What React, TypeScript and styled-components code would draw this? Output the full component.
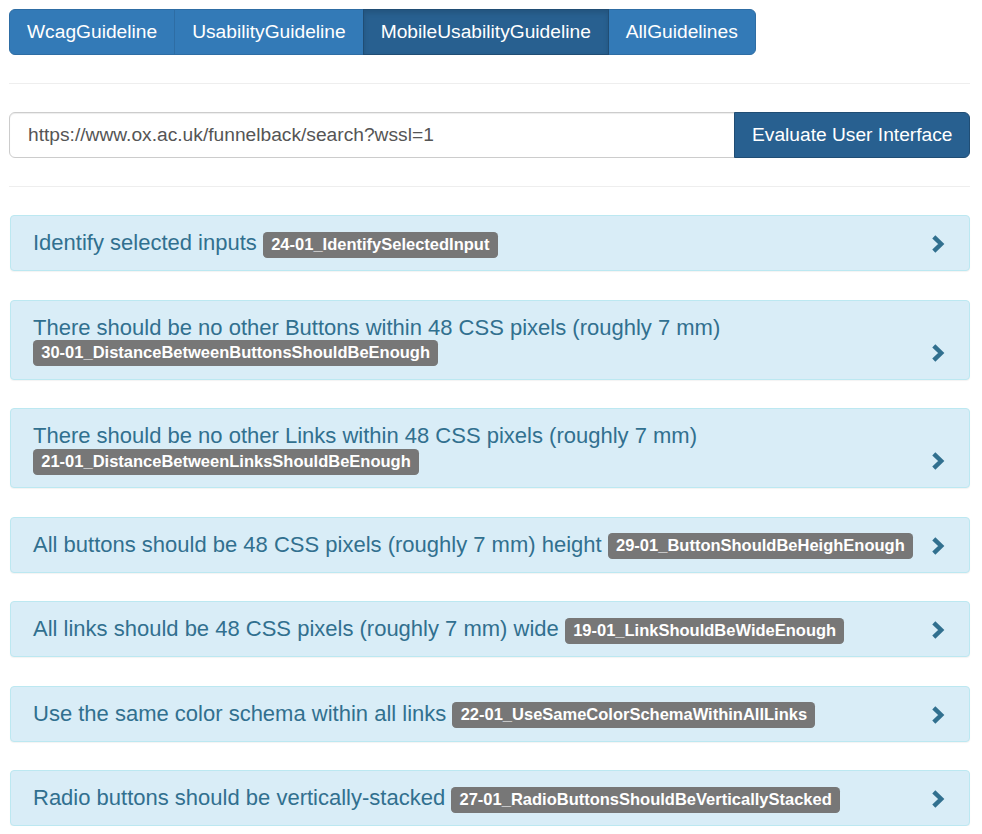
import React from "react";
import styled, { createGlobalStyle, css } from "styled-components";

const GlobalStyle = createGlobalStyle`
  html, body { margin: 0; padding: 0; background: #fff; }
  body {
    font-family: "Liberation Sans", Arial, Helvetica, sans-serif;
    color: #333;
  }
  * { box-sizing: border-box; }
`;

const Page = styled.div`
  padding: 9px 12px 0 9px;
`;

const ButtonGroup = styled.div`
  display: inline-flex;
`;

const GroupButton = styled.button<{ $active?: boolean }>`
  font-family: inherit;
  font-size: 19.2px;
  line-height: 24px;
  padding: 10px 17px;
  color: #fff;
  background: #337ab7;
  border: 1px solid #2e6da4;
  border-radius: 0;
  margin-left: -1px;
  cursor: pointer;
  &:first-child {
    margin-left: 0;
    border-radius: 6px 0 0 6px;
  }
  &:last-child {
    border-radius: 0 6px 6px 0;
  }
  ${(p) =>
    p.$active &&
    css`
      background: #286090;
      border-color: #204d74;
      box-shadow: inset 0 3px 5px rgba(0, 0, 0, 0.125);
      position: relative;
    `}
`;

const Divider = styled.hr`
  margin: 28px 0;
  border: 0;
  border-top: 1px solid #eee;
`;

const InputGroup = styled.form`
  display: flex;
`;

const UrlInput = styled.input`
  flex: 1;
  min-width: 0;
  height: 46px;
  padding: 10px 18px;
  font-family: inherit;
  font-size: 19.2px;
  line-height: 24px;
  color: #555;
  background: #fff;
  border: 1px solid #ccc;
  border-radius: 6px 0 0 6px;
  box-shadow: inset 0 1px 1px rgba(0, 0, 0, 0.075);
  outline: none;
`;

const EvaluateButton = styled.button`
  flex: none;
  height: 46px;
  padding: 10px 16.5px;
  font-family: inherit;
  font-size: 19.2px;
  line-height: 24px;
  color: #fff;
  background: #286090;
  border: 1px solid #204d74;
  border-radius: 0 6px 6px 0;
  margin-left: -1px;
  cursor: pointer;
`;

const PanelList = styled.div`
  display: flex;
  flex-direction: column;
  gap: 28.5px;
  padding-left: 1px;
`;

const Panel = styled.div`
  background: #d9edf7;
  border: 1px solid #bce8f1;
  border-radius: 4px;
  box-shadow: 0 1px 1px rgba(0, 0, 0, 0.05);
`;

const PanelHeading = styled.div`
  display: flex;
  align-items: flex-end;
  gap: 10px;
  padding: 15px 24px 15px 22px;
  color: #31708f;
`;

const PanelTitle = styled.h4`
  flex: 1;
  margin: 0;
  font-size: 22px;
  line-height: 24px;
  font-weight: 400;
  color: #31708f;
`;

const Label = styled.span`
  display: inline;
  padding: 0.2em 0.5em 0.3em;
  font-size: 75%;
  font-weight: 700;
  line-height: 1;
  color: #fff;
  background: #777;
  border-radius: 0.25em;
  white-space: nowrap;
  vertical-align: baseline;
`;

const ChevronBox = styled.span`
  flex: none;
  display: flex;
  align-items: center;
  height: 24px;
  padding-top: 2px;
  color: #31708f;
`;

const Chevron = () => (
  <svg width="14" height="20" viewBox="0 0 14 20" aria-hidden="true">
    <polyline
      points="2.8,2.8 10.2,10 2.8,17.2"
      fill="none"
      stroke="currentColor"
      strokeWidth="4.4"
      strokeLinejoin="miter"
      strokeLinecap="butt"
    />
  </svg>
);

const tabs = [
  { name: "WcagGuideline" },
  { name: "UsabilityGuideline" },
  { name: "MobileUsabilityGuideline", active: true },
  { name: "AllGuidelines" },
];

const guidelines = [
  { title: "Identify selected inputs", id: "24-01_IdentifySelectedInput" },
  {
    title: "There should be no other Buttons within 48 CSS pixels (roughly 7 mm)",
    id: "30-01_DistanceBetweenButtonsShouldBeEnough",
  },
  {
    title: "There should be no other Links within 48 CSS pixels (roughly 7 mm)",
    id: "21-01_DistanceBetweenLinksShouldBeEnough",
  },
  {
    title: "All buttons should be 48 CSS pixels (roughly 7 mm) height",
    id: "29-01_ButtonShouldBeHeighEnough",
  },
  {
    title: "All links should be 48 CSS pixels (roughly 7 mm) wide",
    id: "19-01_LinkShouldBeWideEnough",
  },
  {
    title: "Use the same color schema within all links",
    id: "22-01_UseSameColorSchemaWithinAllLinks",
  },
  {
    title: "Radio buttons should be vertically-stacked",
    id: "27-01_RadioButtonsShouldBeVerticallyStacked",
  },
];

export default function App() {
  return (
    <>
      <GlobalStyle />
      <Page>
        <ButtonGroup>
          {tabs.map((t) => (
            <GroupButton key={t.name} $active={t.active} type="button">
              {t.name}
            </GroupButton>
          ))}
        </ButtonGroup>
        <Divider />
        <InputGroup onSubmit={(e) => e.preventDefault()}>
          <UrlInput defaultValue="https://www.ox.ac.uk/funnelback/search?wssl=1" />
          <EvaluateButton type="submit">Evaluate User Interface</EvaluateButton>
        </InputGroup>
        <Divider />
        <PanelList>
          {guidelines.map((g) => (
            <Panel key={g.id}>
              <PanelHeading>
                <PanelTitle>
                  {g.title} <Label>{g.id}</Label>
                </PanelTitle>
                <ChevronBox>
                  <Chevron />
                </ChevronBox>
              </PanelHeading>
            </Panel>
          ))}
        </PanelList>
      </Page>
    </>
  );
}
